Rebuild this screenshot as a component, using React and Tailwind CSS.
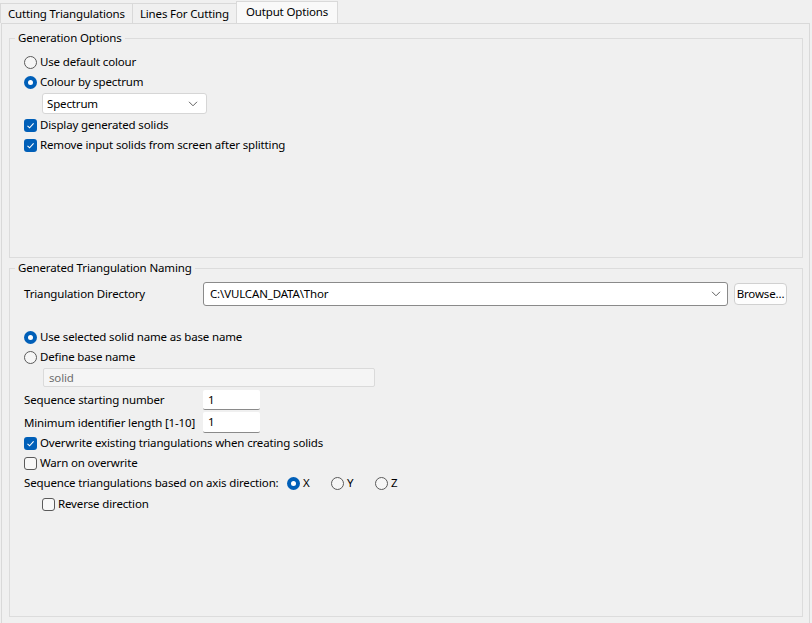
import React from 'react';

const Radio = ({ checked, label, className = '' }) => (
    <div className={`flex items-center h-[20px] ${className}`}>
        {checked ? (
            <span className="w-[13px] h-[13px] shrink-0 rounded-full bg-[#005fb8] flex items-center justify-center">
                <span className="w-[5px] h-[5px] rounded-full bg-white" />
            </span>
        ) : (
            <span className="w-[13px] h-[13px] shrink-0 rounded-full border border-[#5a5a5a] bg-[#f6f6f6]" />
        )}
        <span className="ml-[3px] whitespace-nowrap">{label}</span>
    </div>
);

const Check = ({ checked, label, className = '' }) => (
    <div className={`flex items-center h-[20px] ${className}`}>
        {checked ? (
            <span className="w-[13px] h-[13px] shrink-0 rounded-[3px] bg-[#005fb8] flex items-center justify-center">
                <svg width="9" height="9" viewBox="0 0 9 9">
                    <path d="M1.5 4.8 L3.6 6.8 L7.6 2.4" fill="none" stroke="white" strokeWidth="1.1" />
                </svg>
            </span>
        ) : (
            <span className="w-[13px] h-[13px] shrink-0 rounded-[3px] border border-[#5a5a5a] bg-[#f8f8f8]" />
        )}
        <span className="ml-[3px] whitespace-nowrap">{label}</span>
    </div>
);

const Chevron = () => (
    <svg width="10" height="6" viewBox="0 0 10 6">
        <path d="M1 0.8 L5 4.8 L9 0.8" fill="none" stroke="#606060" strokeWidth="1" />
    </svg>
);

const Tab = ({ label, active }) =>
    active ? (
        <div className="h-[22px] px-[9px] pb-[2px] flex items-center bg-[#f9f9f9] border border-b-0 border-[#d9d9d9] whitespace-nowrap">
            {label}
        </div>
    ) : (
        <div className="h-[20px] px-[7px] flex items-center bg-[#f0f0f0] border border-b-0 border-r-0 border-[#d9d9d9] whitespace-nowrap">
            {label}
        </div>
    );

export default function App() {
    return (
        <div className="w-[812px] h-[623px] overflow-hidden bg-[#f0f0f0] text-[11.5px] tracking-[-0.15px] leading-[16px] text-black font-['Noto_Sans',sans-serif]">
            <div className="flex items-end h-[23px] pt-[1px]">
                <Tab label="Cutting Triangulations" />
                <Tab label="Lines For Cutting" />
                <Tab label="Output Options" active />
            </div>

            <div className="ml-[1px] w-[809px] h-[601px] border border-[#d9d9d9] pl-[7px] pr-[6px] pt-[6px]">
                <fieldset className="h-[228px] border border-[#dcdcdc]">
                    <legend className="ml-[5px] px-[3px] leading-[16px]">Generation Options</legend>
                    <div className="pl-[14px] pt-[6px]">
                        <Radio label="Use default colour" />
                        <Radio label="Colour by spectrum" checked />
                        <div className="ml-[18px] mt-[1px] w-[165px] h-[21px] flex items-center justify-between pl-[4px] pr-[8px] bg-white border border-[#d6d6d6] rounded-[3px]">
                            <span>Spectrum</span>
                            <Chevron />
                        </div>
                        <Check className="mt-[1px]" label="Display generated solids" checked />
                        <Check label="Remove input solids from screen after splitting" checked />
                    </div>
                </fieldset>

                <fieldset className="mt-[2px] h-[357px] border border-[#dcdcdc]">
                    <legend className="ml-[5px] px-[3px] leading-[16px]">Generated Triangulation Naming</legend>
                    <div className="pl-[14px] pt-[6px]">
                        <div className="flex items-center h-[24px]">
                            <span className="w-[179px]">Triangulation Directory</span>
                            <div className="w-[525px] h-[24px] flex items-center justify-between pl-[6px] pr-[6px] bg-white border border-[#8a8a8a] rounded-[3px]">
                                <span>C:\VULCAN_DATA\Thor</span>
                                <Chevron />
                            </div>
                            <div className="ml-[6px] w-[53px] h-[22px] flex items-center justify-center bg-[#fdfdfd] border border-[#d0d0d0] rounded-[4px]">
                                Browse...
                            </div>
                        </div>

                        <Radio className="mt-[21px]" label="Use selected solid name as base name" checked />
                        <Radio label="Define base name" />
                        <div className="ml-[19px] mt-[1px] w-[332px] h-[19px] flex items-center pl-[5px] bg-[#f5f5f5] border border-[#dadada] rounded-[2px] text-[#6d6d6d]">
                            solid
                        </div>

                        <div className="flex items-center h-[20px] mt-[3px]">
                            <span className="w-[179px]">Sequence starting number</span>
                            <div className="w-[57px] h-[20px] flex items-center pl-[5px] bg-white border-b border-[#8a8a8a] rounded-[2px]">1</div>
                        </div>
                        <div className="flex items-center h-[21px] mt-[2px]">
                            <span className="w-[179px] whitespace-nowrap">Minimum identifier length [1-10]</span>
                            <div className="w-[57px] h-[21px] flex items-center pl-[5px] bg-white border-b border-[#8a8a8a] rounded-[2px]">1</div>
                        </div>

                        <Check label="Overwrite existing triangulations when creating solids" checked />
                        <Check label="Warn on overwrite" />
                        <div className="flex items-center h-[20px]">
                            <span className="w-[263px] whitespace-nowrap">Sequence triangulations based on axis direction:</span>
                            <Radio className="w-[44px]" label="X" checked />
                            <Radio className="w-[44px]" label="Y" />
                            <Radio className="w-[44px]" label="Z" />
                        </div>
                        <Check className="ml-[18px] mt-[1px]" label="Reverse direction" />
                    </div>
                </fieldset>
            </div>
        </div>
    );
}
